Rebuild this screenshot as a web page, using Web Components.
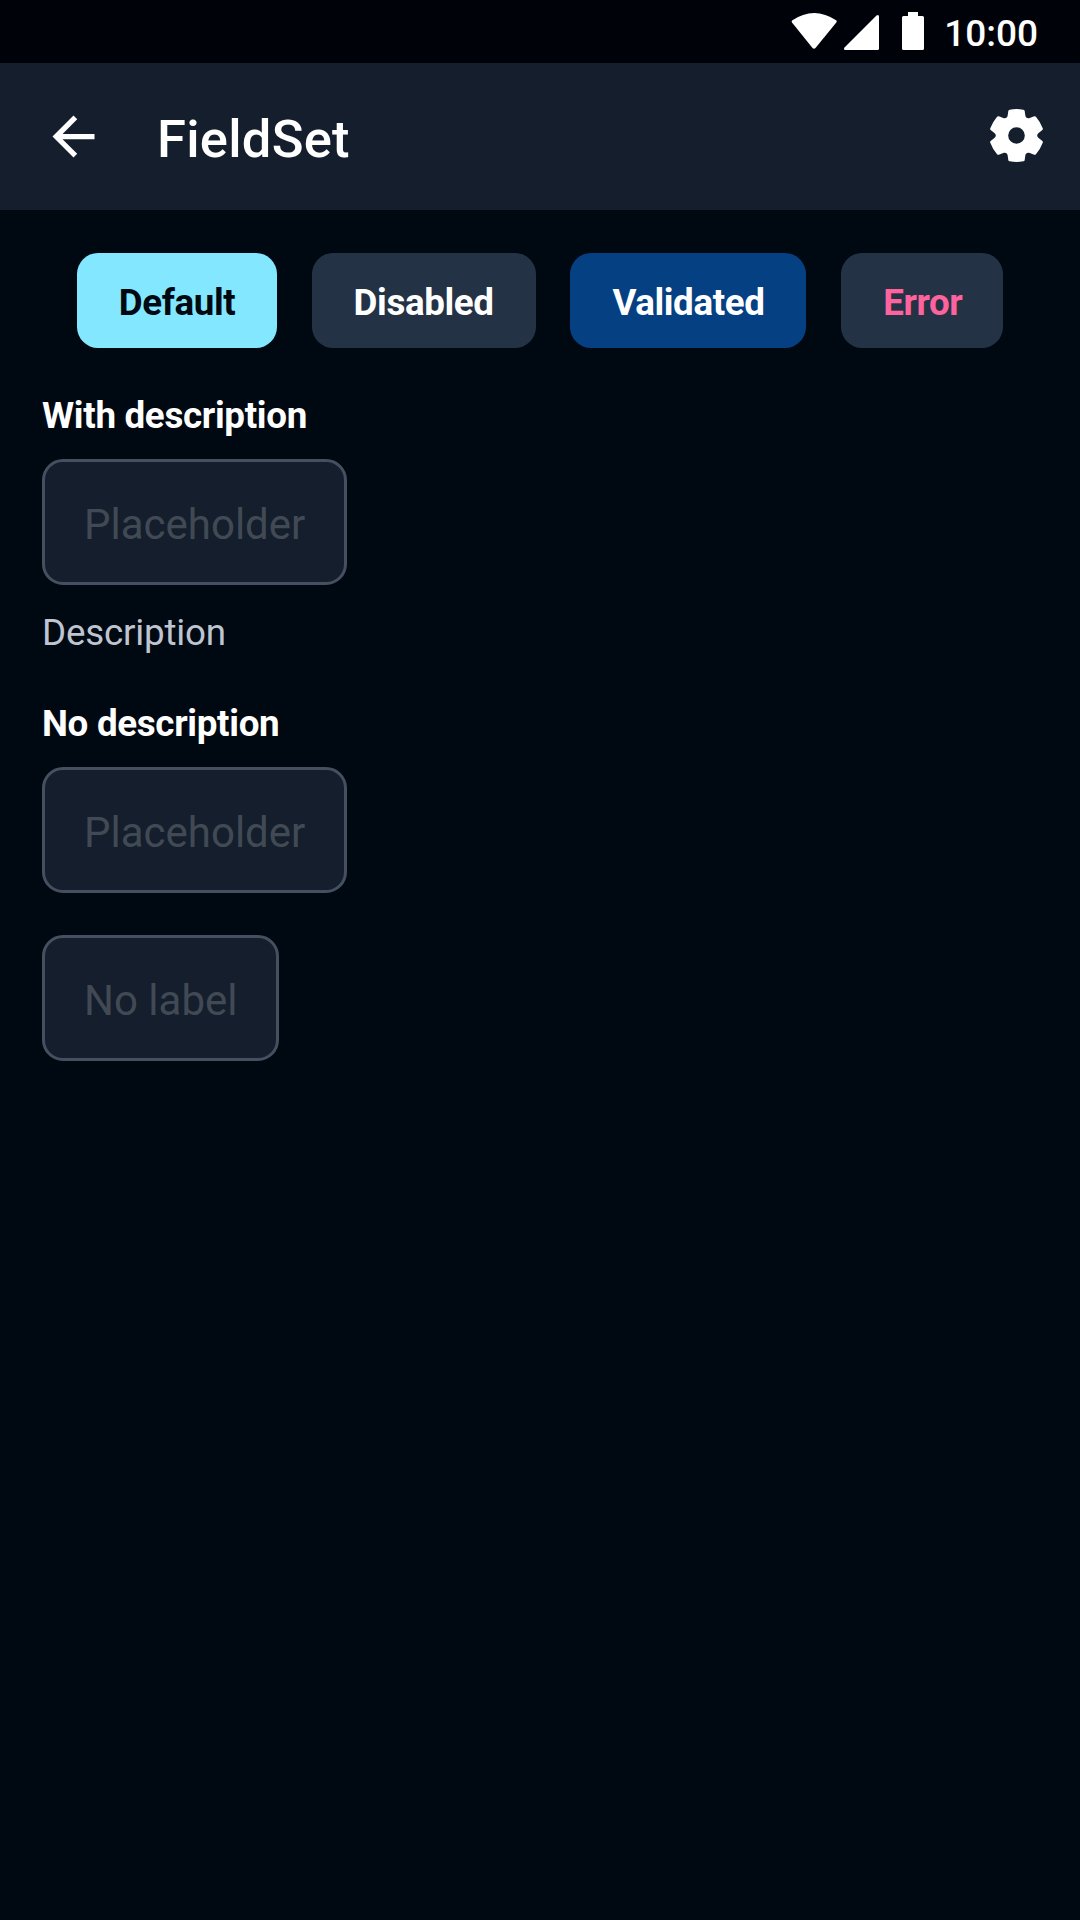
<!DOCTYPE html>
<html lang="en">
<head>
<meta charset="utf-8">
<title>FieldSet</title>
<style>
html,body{margin:0;padding:0;background:#000811}
body{font-family:Roboto,"Noto Sans",sans-serif;color:#fff}
</style>
</head>
<body>
<demo-screen>
  <status-bar slot="status">10:00</status-bar>
  <app-header slot="header">FieldSet</app-header>
  <chip-row>
    <state-chip tone="selected" style="width:200px">Default</state-chip>
    <state-chip style="width:224px">Disabled</state-chip>
    <state-chip tone="validated" style="width:236px">Validated</state-chip>
    <state-chip tone="error" style="width:162px">Error</state-chip>
  </chip-row>
  <field-set><span slot="label">With description</span><text-input>Placeholder</text-input><span slot="description">Description</span></field-set>
  <field-set><span slot="label">No description</span><text-input>Placeholder</text-input></field-set>
  <field-set><text-input>No label</text-input></field-set>
</demo-screen>
<script>
const define = (name, html) => customElements.define(name, class extends HTMLElement {
  constructor() {
    super();
    this.attachShadow({ mode: 'open' }).innerHTML = html;
  }
});

// Six-toothed cog: each 60 degree sector is one tooth plus half a notch on either side.
const cog = () => {
  const rot = (x, y, k) => {
    const a = k * Math.PI / 3;
    return (x * Math.cos(a) - y * Math.sin(a)).toFixed(2) + ' ' + (x * Math.sin(a) + y * Math.cos(a)).toFixed(2);
  };
  let d = '';
  for (let k = 0; k < 6; k++) {
    const p = (x, y) => rot(x, y, k);
    d += (k ? 'L' : 'M') + p(-26, -60) + 'L' + p(-24, -74) + 'Q' + p(-23.5, -77) + ' ' + p(-20, -77.5)
      + 'Q' + p(0, -81) + ' ' + p(20, -77.5) + 'Q' + p(23.5, -77) + ' ' + p(24, -74) + 'L' + p(26, -60)
      + 'C' + p(27, -53) + ' ' + p(32.4, -49.9) + ' ' + p(38.96, -52.52);
  }
  return d + 'Z M24.5 0A24.5 24.5 0 1 0 -24.5 0A24.5 24.5 0 1 0 24.5 0Z';
};

define('demo-screen', `<style>
:host{display:flex;flex-direction:column;width:1080px;height:1920px;background:#000811;overflow:hidden}
main{display:flex;flex-direction:column;align-items:flex-start;gap:42px;padding:43px 42px 0}
</style><slot name="status"></slot><slot name="header"></slot><main><slot></slot></main>`);

define('status-bar', `<style>
:host{display:flex;justify-content:flex-end;height:63px;background:#000209;box-sizing:border-box;padding-right:42px;font-size:37px;font-weight:500;line-height:67px}
svg{display:block;width:153px;height:63px;flex:none}
</style><svg viewBox="791 0 153 63" fill="#fff"><path d="M792 20.5Q814 5.500 836.500 20.500Q837 21.500 836.300 22.500L815.500 48Q814 49.500 812.500 48L792 22.500Q791.200 21.500 792 20.500Z"/><path d="M876.500 15.500Q879 14 879 17V48.500Q879 50 877.500 50H845.500Q843 50 844.500 47.500Z"/><path d="M908 12H918V16H922.500Q924 16 924 17.500V48.500Q924 50 922.500 50H903.500Q902 50 902 48.500V17.500Q902 16 903.500 16H908Z"/></svg><span><slot></slot></span>`);

define('app-header', `<style>
:host{display:flex;align-items:center;height:147px;background:#141e2c;box-sizing:border-box;padding:0 32px 0 42px}
.back{width:63px;height:63px;margin-right:52px}
h1{margin:0;flex:1;font-size:52.5px;font-weight:500;letter-spacing:.25px;line-height:62px;padding-top:5px}
.cog{width:63px;height:63px;margin-bottom:2px}
</style><svg class="back" viewBox="0 0 24 24" fill="#fff"><path d="M20 11H7.830l5.590-5.590L12 4l-8 8 8 8 1.410-1.410L7.830 13H20v-2z"/></svg><h1><slot></slot></h1><svg class="cog" viewBox="-94.500 -94.500 189 189" fill="#fff" fill-rule="evenodd"><path transform="scale(1.02 1)" d="${cog()}"/></svg>`);

define('chip-row', `<style>
:host{display:flex;justify-content:space-evenly;align-self:stretch}
</style><slot></slot>`);

define('state-chip', `<style>
:host{display:flex;align-items:center;height:95px;box-sizing:border-box;padding:4px 0 0 42px;border-radius:21px;background:#243246;color:#fff;font-size:36.75px;font-weight:700;letter-spacing:-.4px;white-space:nowrap}
:host([tone=selected]){background:#83e8ff;color:#000811}
:host([tone=validated]){background:#054083}
:host([tone=error]){color:#ff639e}
</style><slot></slot>`);

define('field-set', `<style>
:host{display:flex;flex-direction:column;align-items:flex-start;font-size:36.75px;line-height:47px}
::slotted([slot=label]){font-weight:700;letter-spacing:-.31px;margin:2px 0 20px}
::slotted([slot=description]){color:#bec5d0;letter-spacing:-.2px;margin-top:24px}
</style><slot name="label"></slot><slot></slot><slot name="description"></slot>`);

define('text-input', `<style>
:host{display:flex;align-items:center;height:126px;box-sizing:border-box;padding:5px 39px 0;border:3px solid #445060;border-radius:21px;background:#141e2c;color:#414a54;font-size:42px;line-height:49px;white-space:nowrap}
</style><slot></slot>`);
</script>
</body>
</html>
